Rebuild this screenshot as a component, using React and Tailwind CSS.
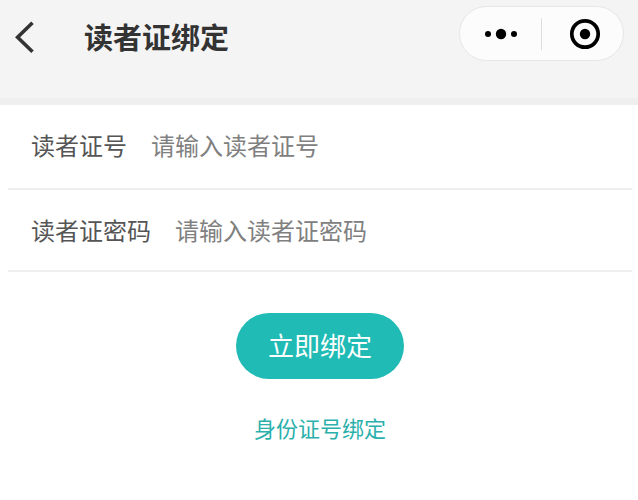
import React, { useState } from "react";

const Header = () => {
  return (
    <header className="flex justify-between items-start bg-[#f4f4f4] border-b-7 border-[#efefef] pt-1.5 pb-[30px] pl-3 pr-3.5">
      <div className="flex items-center h-[62px]">
        <button type="button" aria-label="返回" className="w-[26px] text-[#333333]">
          <svg width="26" height="36" viewBox="0 0 26 36" fill="none" stroke="currentColor" strokeWidth="3.6">
            <path d="M20.5 3.8 L5.6 18.3 L20.5 32.8" />
          </svg>
        </button>
        <h1 className="ml-[46px] pb-0.5 text-[29px] leading-10 font-bold text-[#333333]">读者证绑定</h1>
      </div>

      <div className="flex items-center h-[55px] bg-[#fcfcfc] border border-[#e6e6e6] rounded-full">
        <button type="button" aria-label="更多" className="flex justify-center w-[81px]">
          <svg width="36" height="12" viewBox="0 0 36 12" fill="#000000">
            <circle cx="5" cy="6" r="3" />
            <circle cx="18" cy="6" r="5.2" />
            <circle cx="31" cy="6" r="3" />
          </svg>
        </button>
        <span className="w-px h-8 bg-[#dedede]" />
        <button type="button" aria-label="关闭" className="flex justify-center w-[81px] pl-1">
          <svg width="32" height="32" viewBox="0 0 32 32" fill="none">
            <circle cx="16" cy="16" r="13.2" stroke="#000000" strokeWidth="3.7" />
            <circle cx="16" cy="16" r="5.2" fill="#000000" />
          </svg>
        </button>
      </div>
    </header>
  );
};

const Field = ({ label, name, type, value, onChange }) => {
  return (
    <div className="flex items-center gap-6 pl-[23px] py-5 first:pb-[23px] border-b-2 border-[#efefef] text-2xl">
      <label htmlFor={name} className="shrink-0 leading-10 text-[#555555]">
        {label}
      </label>
      <input
        id={name}
        type={type}
        name={name}
        value={value}
        onChange={onChange}
        placeholder={"请输入" + label}
        className="flex-1 min-w-0 h-10 leading-10 text-[#333333] placeholder:text-[#808080] outline-none"
      />
    </div>
  );
};

const App = () => {
  const [card, setCard] = useState({ number: "", password: "" });

  const handleChange = (e) => {
    setCard({ ...card, [e.target.name]: e.target.value });
  };

  const handleSubmit = (e) => {
    e.preventDefault();
  };

  return (
    <div className="min-h-screen bg-white font-['Noto_Sans_CJK_SC',sans-serif]">
      <Header />

      <form onSubmit={handleSubmit} className="flex flex-col pl-2 pr-1.5">
        <Field label="读者证号" name="number" type="text" value={card.number} onChange={handleChange} />
        <Field label="读者证密码" name="password" type="password" value={card.password} onChange={handleChange} />

        <div className="flex flex-col items-center gap-8 pt-[41px]">
          <button type="submit" className="px-8 pt-3 pb-3.5 bg-[#1fbbb4] text-white text-[26px] leading-10 rounded-full">
            立即绑定
          </button>
          <a href="#id-card" className="text-[22px] leading-8 text-[#2bb0ab]">
            身份证号绑定
          </a>
        </div>
      </form>
    </div>
  );
};

export default App;
